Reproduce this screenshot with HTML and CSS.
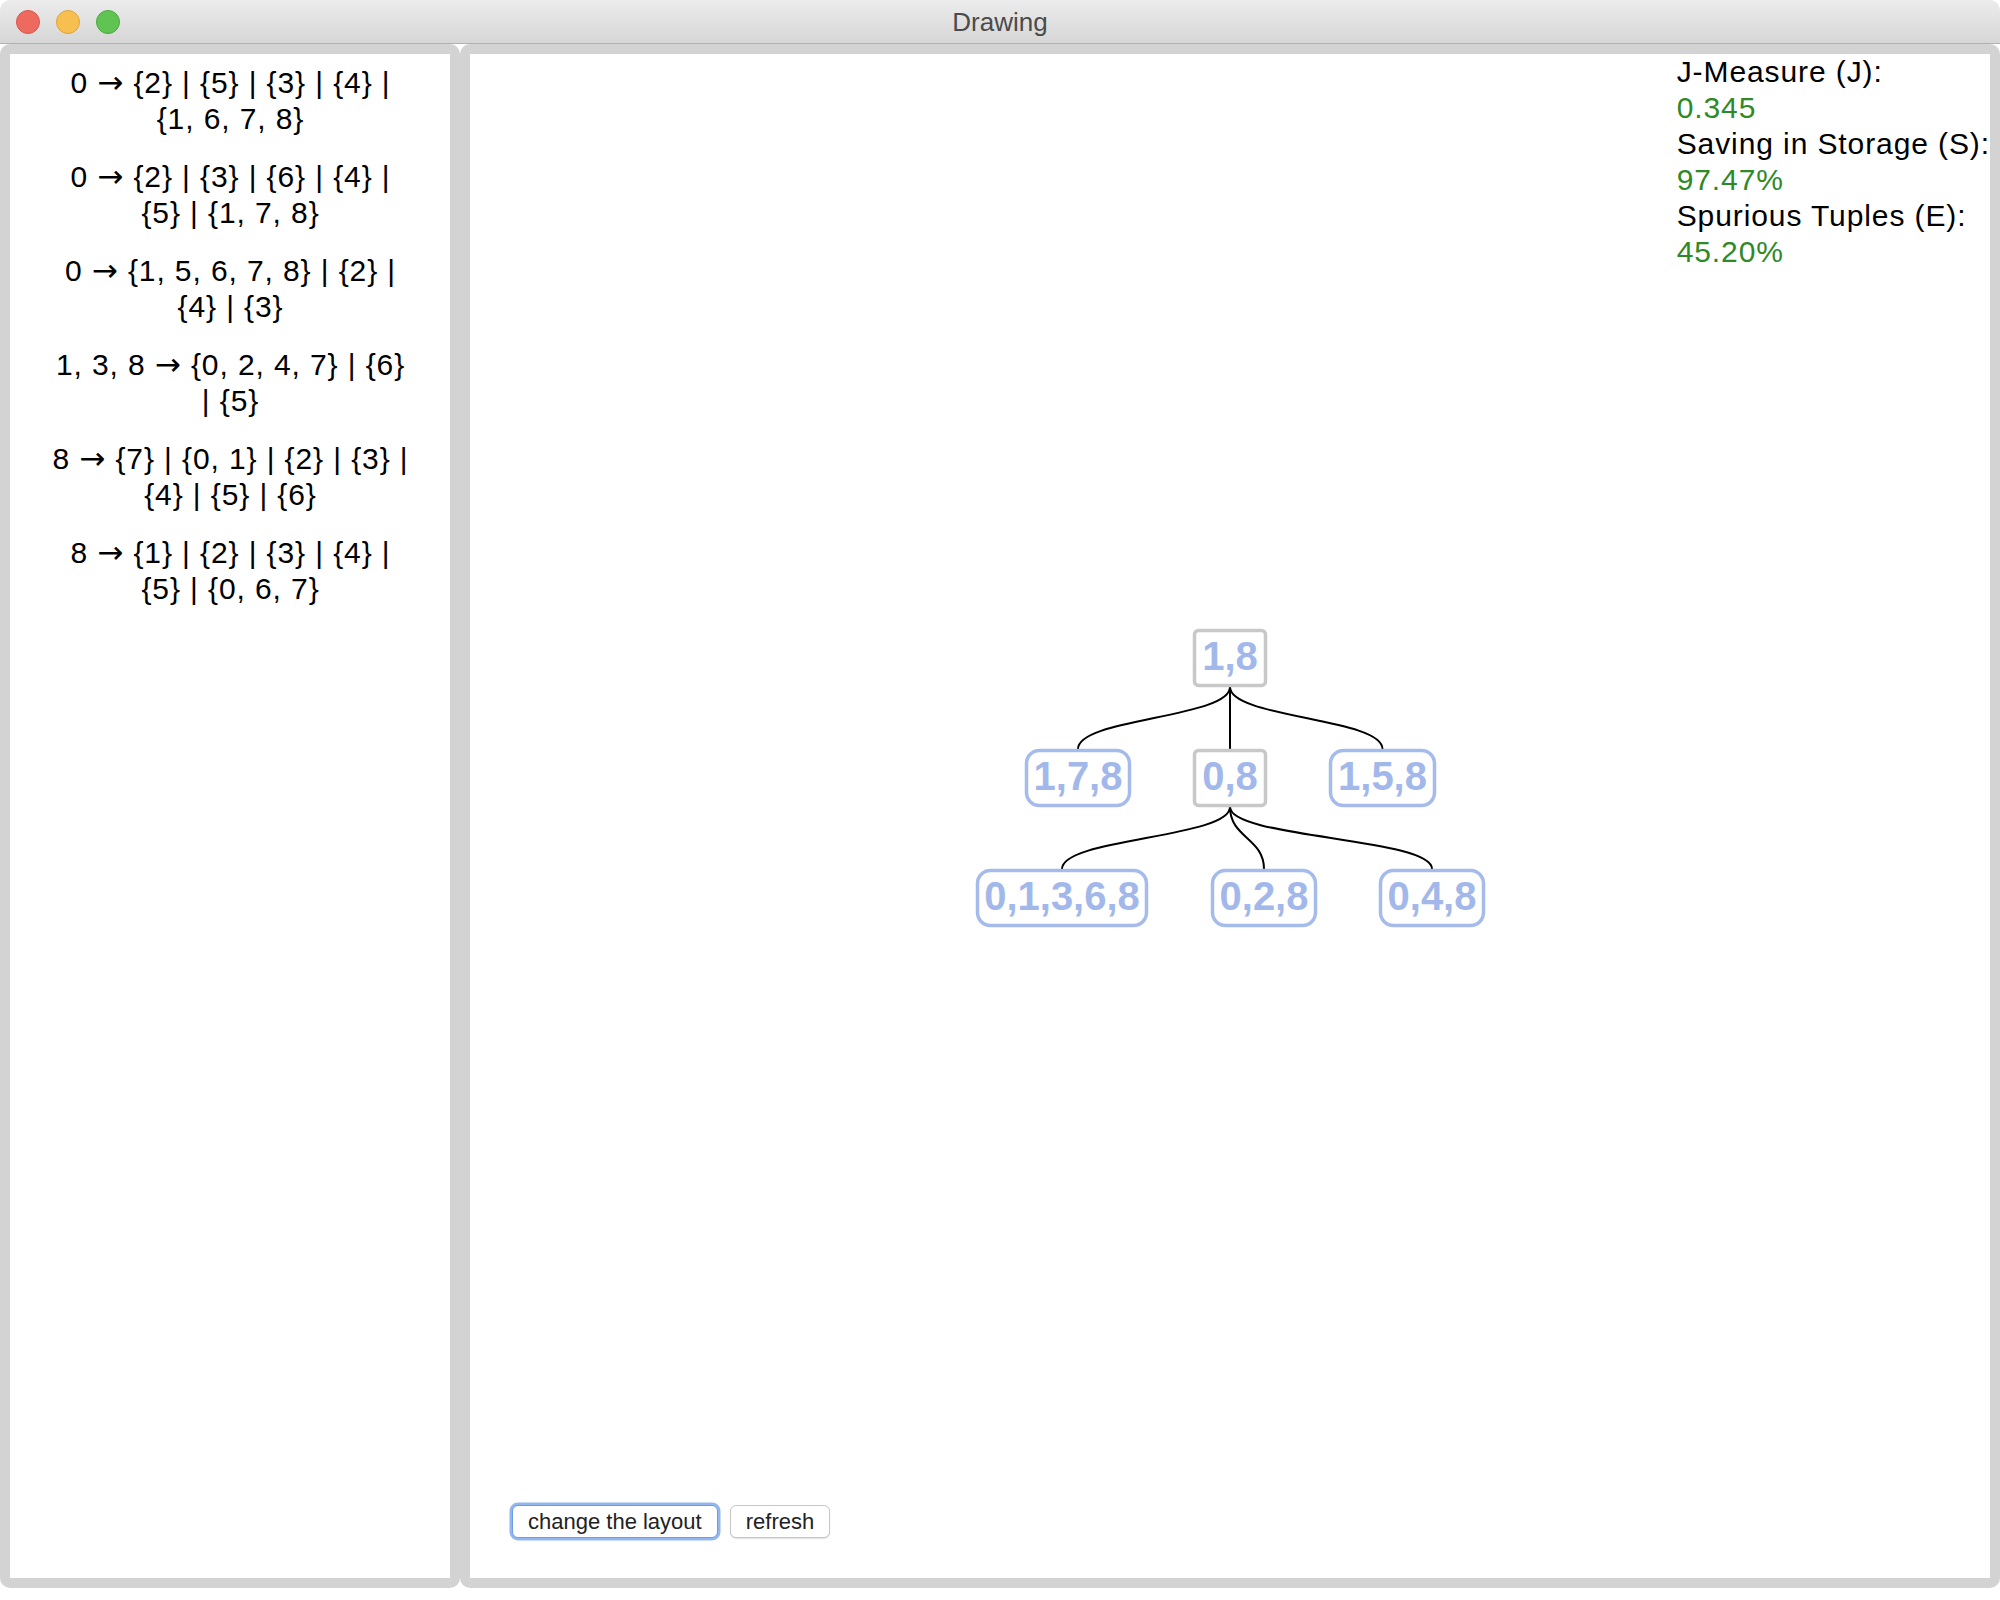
FILE: index.html
```html
<!DOCTYPE html>
<html>
<head>
<meta charset="utf-8">
<title>Drawing</title>
<link rel="stylesheet" href="styles.css">
</head>
<body>
<div class="window">
  <header class="titlebar">
    <div class="lights">
      <span class="light red"></span>
      <span class="light yellow"></span>
      <span class="light green"></span>
    </div>
    <div class="title">Drawing</div>
  </header>
  <main class="panes">
    <section class="pane pane-left">
      <div class="pane-inner list">
        <p class="fd">0 <span class="arr">→</span> {2} | {5} | {3} | {4} | {1, 6, 7, 8}</p>
        <p class="fd">0 <span class="arr">→</span> {2} | {3} | {6} | {4} | {5} | {1, 7, 8}</p>
        <p class="fd">0 <span class="arr">→</span> {1, 5, 6, 7, 8} | {2} | {4} | {3}</p>
        <p class="fd">1, 3, 8 <span class="arr">→</span> {0, 2, 4, 7} | {6} | {5}</p>
        <p class="fd">8 <span class="arr">→</span> {7} | {0, 1} | {2} | {3} | {4} | {5} | {6}</p>
        <p class="fd">8 <span class="arr">→</span> {1} | {2} | {3} | {4} | {5} | {0, 6, 7}</p>
      </div>
    </section>
    <section class="pane pane-right">
      <div class="pane-inner canvas">
        <svg class="tree" width="1520" height="1524" viewBox="0 0 1520 1524" xmlns="http://www.w3.org/2000/svg">
          <g class="links">
            <path d="M760,633 C760,664 608,664 608,695"/>
            <path d="M760,633 L760,695"/>
            <path d="M760,633 C760,664 912.5,664 912.5,695"/>
            <path d="M760,753 C760,784 592,784 592,815"/>
            <path d="M760,753 C760,784 794,784 794,815"/>
            <path d="M760,753 C760,784 962,784 962,815"/>
          </g>
          <g class="nodes">
            <rect class="sep" x="724.5" y="576.5" width="71" height="55" rx="4"/>
            <text x="760" y="616">1,8</text>

            <rect class="leaf" x="556.5" y="696.5" width="103" height="55" rx="13"/>
            <text x="608" y="736">1,7,8</text>
            <rect class="sep" x="724.5" y="696.5" width="71" height="55" rx="4"/>
            <text x="760" y="736">0,8</text>
            <rect class="leaf" x="860.5" y="696.5" width="104" height="55" rx="13"/>
            <text x="912.5" y="736">1,5,8</text>

            <rect class="leaf" x="507.5" y="816.5" width="169" height="55" rx="13"/>
            <text x="592" y="856">0,1,3,6,8</text>
            <rect class="leaf" x="742.5" y="816.5" width="103" height="55" rx="13"/>
            <text x="794" y="856">0,2,8</text>
            <rect class="leaf" x="910.5" y="816.5" width="103" height="55" rx="13"/>
            <text x="962" y="856">0,4,8</text>
          </g>
        </svg>
        <div class="metrics">
          <div class="m-label">J-Measure (J):</div>
          <div class="m-value">0.345</div>
          <div class="m-label">Saving in Storage (S):</div>
          <div class="m-value">97.47%</div>
          <div class="m-label">Spurious Tuples (E):</div>
          <div class="m-value">45.20%</div>
        </div>
        <div class="actions">
          <button class="btn btn-focus" type="button">change the layout</button>
          <button class="btn" type="button">refresh</button>
        </div>
      </div>
    </section>
  </main>
</div>
</body>
</html>
```

FILE: styles.css
```css
html, body {
  margin: 0;
  padding: 0;
  background: #ffffff;
}

body {
  width: 2000px;
  height: 1600px;
  overflow: hidden;
  font-family: "Liberation Sans", Arial, Helvetica, sans-serif;
  color: #000;
}

.window {
  width: 2000px;
  height: 1588px;
  display: flex;
  flex-direction: column;
}

/* ---------- title bar ---------- */
.titlebar {
  position: relative;
  height: 43px;
  flex: 0 0 43px;
  border-bottom: 1px solid #b1b1b1;
  background: linear-gradient(#ececec, #d6d6d6);
  border-radius: 10px 10px 0 0;
  display: flex;
  align-items: center;
  justify-content: center;
}

.lights {
  position: absolute;
  left: 16px;
  top: 10px;
  display: flex;
  gap: 16px;
}

.light {
  width: 22px;
  height: 22px;
  border-radius: 50%;
  border: 1px solid transparent;
}

.light.red { background: #ef6a5e; border-color: #d9574c; }
.light.yellow { background: #f7bf4f; border-color: #dea33a; }
.light.green { background: #60c453; border-color: #4aa93f; }

.title {
  font-size: 26px;
  color: #4b4b4b;
  line-height: 43px;
  padding-top: 2px;
}

/* ---------- panes ---------- */
.panes {
  flex: 1;
  display: flex;
  min-height: 0;
}

.pane {
  box-sizing: border-box;
  background: #d3d3d3;
  border-radius: 10px;
  padding: 10px;
  display: flex;
}

.pane-left {
  width: 460px;
  flex: 0 0 460px;
}

.pane-right {
  flex: 1;
}

.pane-inner {
  flex: 1;
  background: #ffffff;
}

/* ---------- FD list ---------- */
.list {
  box-sizing: border-box;
  padding: 11px 41px 0 42px;
  display: flex;
  flex-direction: column;
  gap: 22px;
}

.fd {
  margin: 0;
  text-align: center;
  font-size: 30px;
  line-height: 36px;
  letter-spacing: 0.9px;
}

.arr {
  font-family: "DejaVu Sans", sans-serif;
  font-size: 31px;
  line-height: 1;
}

/* ---------- canvas ---------- */
.canvas {
  position: relative;
  display: flex;
  flex-direction: column;
}

.tree {
  position: absolute;
  left: 0;
  top: 0;
}

.links path {
  fill: none;
  stroke: #000;
  stroke-width: 2;
}

.nodes rect {
  fill: #fff;
  stroke-width: 3.5;
}

.nodes rect.sep {
  stroke: #c8c8c8;
}

.nodes rect.leaf {
  stroke: #a5bbeb;
}

.nodes text {
  font-family: "Liberation Sans", Arial, Helvetica, sans-serif;
  font-weight: bold;
  font-size: 40px;
  fill: #a3b8ea;
  text-anchor: middle;
}

.metrics {
  position: relative;
  align-self: flex-end;
  font-size: 30px;
  line-height: 36px;
  letter-spacing: 0.9px;
  white-space: nowrap;
}

.m-value {
  color: #2e8a27;
}

.actions {
  position: relative;
  margin-top: auto;
  padding: 0 0 40px 42px;
  display: flex;
  gap: 12px;
}

.btn {
  box-sizing: border-box;
  height: 33px;
  padding: 0 15px;
  font-family: "Liberation Sans", Arial, Helvetica, sans-serif;
  font-size: 22px;
  color: #222;
  background: #fff;
  border: 1px solid #c6c6c6;
  border-radius: 6px;
  box-shadow: 0 1px 1px rgba(0, 0, 0, 0.12);
  line-height: 31px;
}

.btn-focus {
  border-color: #6d9be7;
  box-shadow: 0 0 0 2.5px #94b6ee;
}
```
